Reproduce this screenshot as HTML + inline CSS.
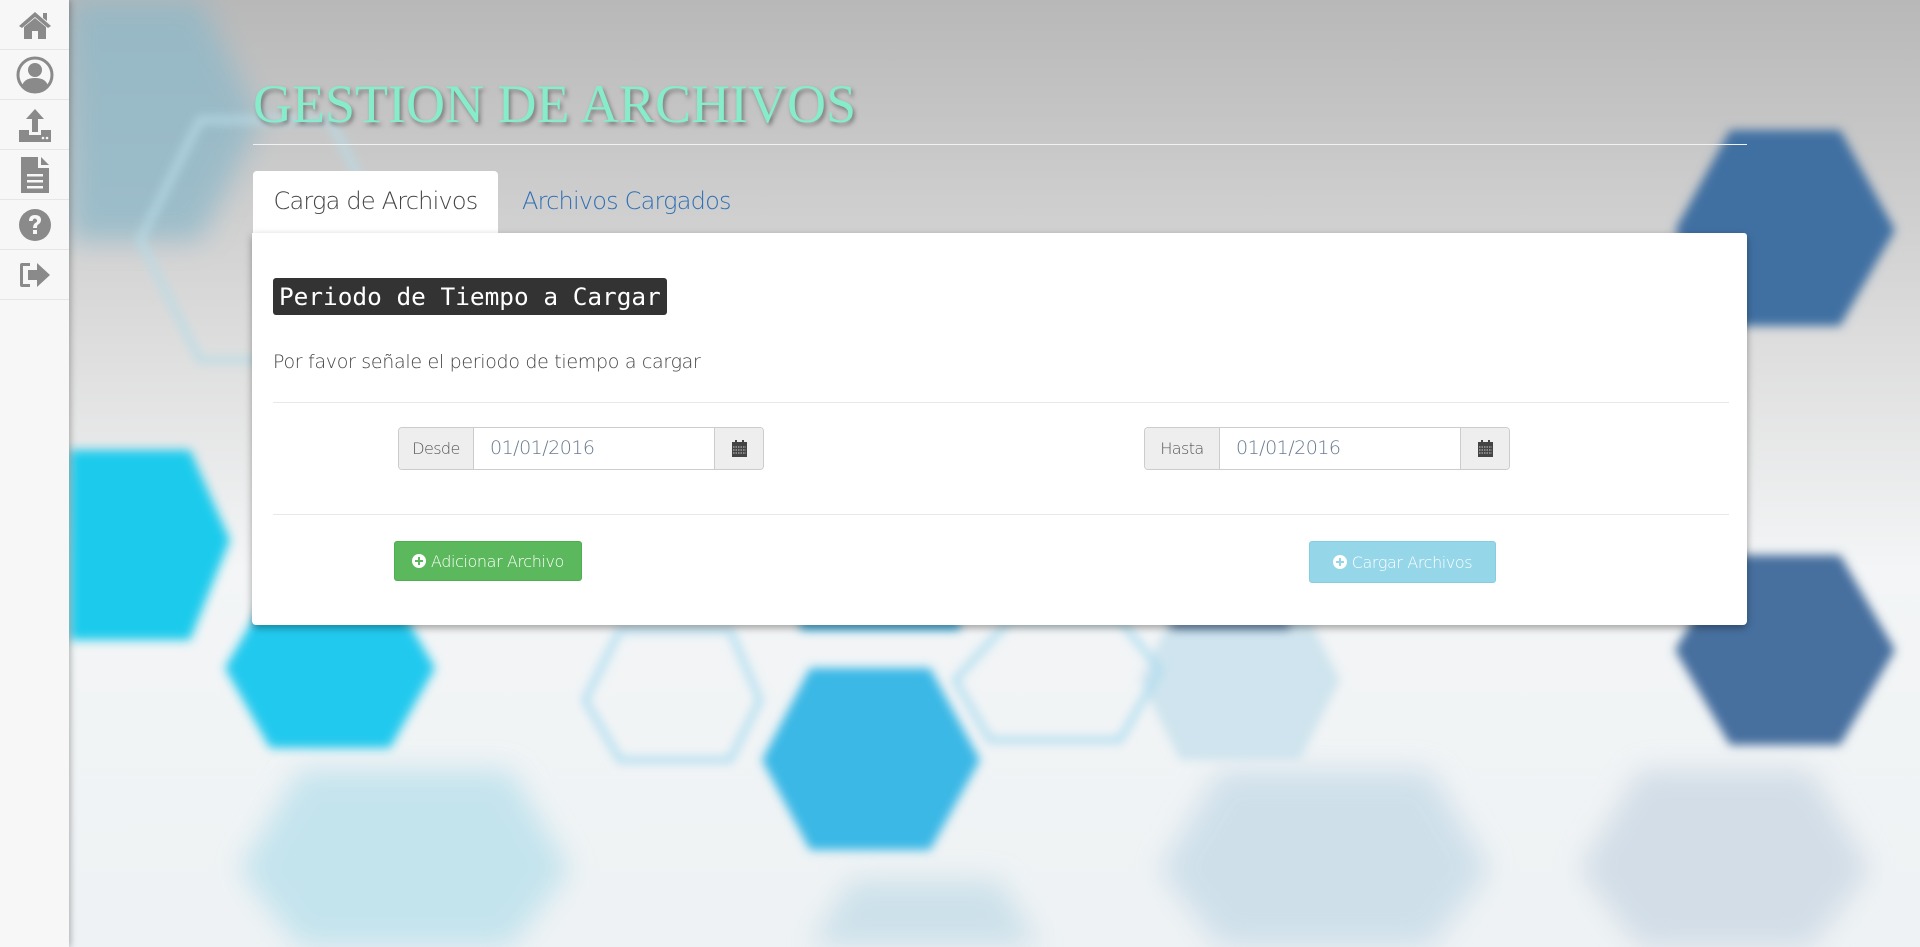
<!DOCTYPE html>
<html><head><meta charset="utf-8">
<style>
*{box-sizing:border-box;margin:0;padding:0}
html,body{width:1920px;height:947px;overflow:hidden}
body{position:relative;font-family:"Liberation Sans",sans-serif;background:#f4f6f7}
#bg{position:absolute;left:0;top:0;width:1920px;height:947px;overflow:hidden}
#side{position:absolute;left:0;top:0;width:69px;height:947px;background:#f7f7f7;box-shadow:2px 0 6px rgba(0,0,0,.25);z-index:3}
#side .it{height:50px;border-bottom:1px solid #e6e6e6;display:flex;align-items:center;justify-content:center}
#side svg{fill:#8a8a8a}
h1{position:absolute;left:253px;top:73px;font-family:"Liberation Serif",serif;font-weight:normal;font-size:54px;letter-spacing:0px;color:#86ecca;text-shadow:2px 3px 4px rgba(60,60,60,.55);z-index:2;white-space:nowrap}
.hr1{position:absolute;left:253px;top:144px;width:1494px;height:1px;background:#f2f2f2;z-index:2}
.tab{position:absolute;top:171px;height:63px;font-size:24px;line-height:60px;z-index:2;font-family:"DejaVu Sans",sans-serif;font-weight:200;letter-spacing:-0.8px}
.tab.a{left:253px;width:245px;background:#fff;border-radius:4px 4px 0 0;color:#444;text-align:center}
.tab.b{left:522px;color:#2f6fb5}
#panel{position:absolute;left:252px;top:233px;width:1495px;height:392px;background:#fff;border-radius:0 3px 4px 4px;box-shadow:0 3px 8px rgba(0,0,0,.35);z-index:2}
.hd{position:absolute;left:21px;top:45px;height:37px;padding:0 6px;background:#333;color:#fff;border-radius:3px;font-family:"DejaVu Sans Mono",monospace;font-size:24.4px;line-height:37px}
.p{position:absolute;left:21px;top:118px;font-size:19px;color:#444;font-family:"DejaVu Sans",sans-serif;font-weight:200;letter-spacing:-0.3px}
.hr{position:absolute;left:21px;width:1456px;height:1px;background:#e8e8e8}
.ig{position:absolute;top:194px;height:43px;width:366px;display:flex;border:1px solid #ccc;border-radius:4px;overflow:hidden}
.ig .ad{width:75px;background:#eee;border-right:1px solid #ccc;font-size:16px;color:#555;text-align:center;line-height:41px;font-family:"DejaVu Sans",sans-serif;font-weight:200;letter-spacing:-0.6px}
.ig .in{flex:1;font-size:19px;color:#6a7a90;padding-left:16px;line-height:41px;font-family:"DejaVu Sans",sans-serif;font-weight:200;letter-spacing:-0.5px}
.ig .bt{width:49px;background:#eee;border-left:1px solid #ccc;display:flex;align-items:center;justify-content:center}
.btn{position:absolute;top:308px;height:40px;border-radius:3px;color:#fff;font-size:16px;display:flex;align-items:center;justify-content:center;font-family:"DejaVu Sans",sans-serif;font-weight:200;letter-spacing:-0.4px}
.btn .pl{width:14px;height:14px;border-radius:50%;background:#fff;margin-right:5px;position:relative}
.btn .pl:before,.btn .pl:after{content:"";position:absolute;background:currentColor;left:3px;top:6px;width:8px;height:2px}
.btn .pl:after{left:6px;top:3px;width:2px;height:8px}
</style></head><body>
<svg id="bg" width="1920" height="947" viewBox="0 0 1920 947" xmlns="http://www.w3.org/2000/svg">
<defs>
<linearGradient id="g" x1="0" y1="0" x2="0" y2="1"><stop offset="0" stop-color="#b8b8b8"/><stop offset=".35" stop-color="#dcdcdc"/><stop offset=".6" stop-color="#f3f5f6"/><stop offset="1" stop-color="#eef2f4"/></linearGradient>
<filter id="b" x="-20%" y="-20%" width="140%" height="140%"><feGaussianBlur stdDeviation="5"/></filter>
<filter id="b2" x="-20%" y="-20%" width="140%" height="140%"><feGaussianBlur stdDeviation="14"/></filter>
</defs>
<rect width="1920" height="947" fill="url(#g)"/>
<g filter="url(#b2)" opacity=".8">
<polygon points="70,0 200,0 260,120 200,240 70,240" fill="#8fb8c8"/>
<polygon points="300,770 510,770 570,870 510,947 300,947 240,870" fill="#b9e0ec"/>
<polygon points="1220,770 1430,770 1490,870 1430,947 1220,947 1160,870" fill="#c7dbe8"/>
<polygon points="1640,770 1810,770 1870,870 1810,947 1640,947 1580,870" fill="#cbd8e4"/>
<polygon points="850,880 1000,880 1040,947 810,947" fill="#c5dde8"/>
</g>
<g filter="url(#b)">
<polygon points="70,450 190,450 230,540 190,640 70,640" fill="#1ecbec"/>
<polygon points="270,590 390,590 435,668 390,748 270,748 225,668" fill="#22c9ee"/>
<polygon points="810,668 930,668 980,760 930,850 810,850 762,760" fill="#3ab8e6"/>
<polygon points="1730,130 1840,130 1895,230 1840,326 1730,326 1675,230" fill="#3f6fa2"/>
<polygon points="1730,555 1840,555 1895,650 1840,745 1730,745 1675,650" fill="#46709f"/>
<polygon points="1180,600 1300,600 1340,680 1300,760 1180,760 1140,680" fill="#cfe4ee"/>
<polygon points="620,630 730,630 760,700 730,760 620,760 585,700" fill="none" stroke="#aadcf0" stroke-width="6"/>
<polygon points="1010,620 1120,620 1160,670 1120,740 990,740 955,680" fill="none" stroke="#aadcf0" stroke-width="6"/>
<polygon points="200,120 330,120 390,240 330,360 200,360 140,240" fill="none" stroke="#b8dbe6" stroke-width="6"/>
<rect x="800" y="620" width="160" height="10" fill="#2aa7dc"/>
<rect x="1170" y="620" width="120" height="10" fill="#4a7aa8"/>
</g>
</svg>
<div id="side">
<div class="it"><svg width="34" height="30" viewBox="0 0 34 30"><path d="M17 2 L1 16 L4 18 L17 7 L30 18 L33 16 Z M6 17 L17 8 L28 17 V29 H20 V21 H14 V29 H6Z M25 3h4v8l-4-3z"/></svg></div>
<div class="it"><svg width="38" height="38" viewBox="0 0 38 38"><circle cx="19" cy="19" r="17" fill="none" stroke="#8a8a8a" stroke-width="3"/><circle cx="19" cy="14" r="7"/><path d="M6 30 Q8 22 19 22 Q30 22 32 30 Q26 36 19 36 Q12 36 6 30Z"/></svg></div>
<div class="it"><svg width="36" height="34" viewBox="0 0 36 34"><path d="M18 1 L27 11 H21 V24 H15 V11 H9Z M2 22 H12 V27 H24 V22 H34 V34 H2Z" /><circle cx="26" cy="30" r="1.3" fill="#f7f7f7"/><circle cx="30" cy="30" r="1.3" fill="#f7f7f7"/></svg></div>
<div class="it"><svg width="30" height="38" viewBox="0 0 30 38"><path d="M1 1 H18 V12 H29 V37 H1Z M21 1 L29 9 H21Z"/><rect x="7" y="18" width="16" height="2.5" fill="#f7f7f7"/><rect x="7" y="24" width="16" height="2.5" fill="#f7f7f7"/><rect x="7" y="30" width="16" height="2.5" fill="#f7f7f7"/></svg></div>
<div class="it"><svg width="34" height="34" viewBox="0 0 34 34"><circle cx="17" cy="17" r="16"/><path d="M11 13 Q11 7 17 7 Q23 7 23 12 Q23 15 19.5 17 Q19 18 19 20 H15 Q15 16 18 14.5 Q19.5 13.5 19 12 Q18 10.5 17 10.5 Q15 10.5 14.6 13Z" fill="#f7f7f7"/><rect x="15" y="22" width="4" height="4" fill="#f7f7f7"/></svg></div>
<div class="it"><svg width="34" height="30" viewBox="0 0 34 30"><path d="M12 3 H4 Q2 3 2 5 V25 Q2 27 4 27 H12 V24 H5 V6 H12Z"/><path d="M10 10 H19 V3 L32 15 L19 27 V20 H10Z"/></svg></div>
</div>
<h1>GESTION DE ARCHIVOS</h1>
<div class="hr1"></div>
<div class="tab a">Carga de Archivos</div>
<div class="tab b">Archivos Cargados</div>
<div id="panel">
<div class="hd">Periodo de Tiempo a Cargar</div>
<div class="p">Por favor señale el periodo de tiempo a cargar</div>
<div class="hr" style="top:169px"></div>
<div class="ig" style="left:146px"><div class="ad">Desde</div><div class="in">01/01/2016</div><div class="bt"><svg width="15" height="17" viewBox="0 0 15 17"><rect x="0" y="2" width="15" height="15" fill="#444"/><rect x="3" y="0" width="2" height="4" fill="#444"/><rect x="10" y="0" width="2" height="4" fill="#444"/><path d="M1 7h13M1 10h13M1 13h13" stroke="#ccc" stroke-width="1" stroke-dasharray="1.5 1"/></svg></div></div>
<div class="ig" style="left:892px"><div class="ad">Hasta</div><div class="in">01/01/2016</div><div class="bt"><svg width="15" height="17" viewBox="0 0 15 17"><rect x="0" y="2" width="15" height="15" fill="#444"/><rect x="3" y="0" width="2" height="4" fill="#444"/><rect x="10" y="0" width="2" height="4" fill="#444"/><path d="M1 7h13M1 10h13M1 13h13" stroke="#ccc" stroke-width="1" stroke-dasharray="1.5 1"/></svg></div></div>
<div class="hr" style="top:281px"></div>
<div class="btn" style="left:142px;width:188px;background:#5cb85c;border:1px solid #4cae4c;color:#fff"><span class="pl" style="color:#5cb85c"></span>Adicionar Archivo</div>
<div class="btn" style="left:1057px;top:308px;width:187px;height:42px;background:#95d6e9;border:1px solid #86cde3"><span class="pl" style="color:#95d6e9"></span>Cargar Archivos</div>
</div>
</body></html>
